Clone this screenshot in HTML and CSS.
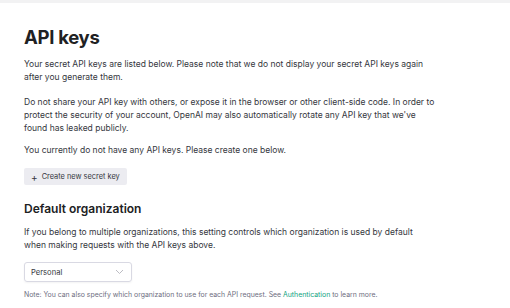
FILE: index.html
```html
<!DOCTYPE html>
<html>
<head>
<meta charset="utf-8">
<link rel="stylesheet" href="styles.css">
</head>
<body>
<div class="topbar"></div>
<main class="page">
  <h1 class="title">API keys</h1>
  <p class="para p1">Your secret API keys are listed below. Please note that we do not display your secret API keys again after you generate them.</p>
  <p class="para p2">Do not share your API key with others, or expose it in the browser or other client-side code. In order to protect the security of your account, OpenAI may also automatically rotate any API key that we've found has leaked publicly.</p>
  <p class="para p3">You currently do not have any API keys. Please create one below.</p>
  <button class="btn"><span class="plus">+</span>Create new secret key</button>
  <h2 class="subtitle">Default organization</h2>
  <p class="para p4">If you belong to multiple organizations, this setting controls which organization is used by default when making requests with the API keys above.</p>
  <div class="select">
    <span>Personal</span>
    <svg class="chev" width="9" height="6" viewBox="0 0 9 6"><path d="M1 1l3.5 3.5L8 1" fill="none" stroke="#b4b4bc" stroke-width="0.9"/></svg>
  </div>
  <p class="note">Note: You can also specify which organization to use for each API request. See <a class="link">Authentication</a> to learn more.</p>
</main>
</body>
</html>
```
FILE: styles.css
```css
html, body { margin: 0; padding: 0; background: #fff; }
body { font-family: Inter, "Noto Sans", sans-serif; color: #353740; width: 510px; height: 308px; overflow: hidden; }
.topbar { height: 3px; background: #f2f2f3; }
.page { padding: 0 24px; width: 416px; }
.title { margin: 22px 0 0; font-size: 18.5px; line-height: 24px; font-weight: 700; color: #202123; letter-spacing: -0.3px; }
.para { margin: 0; font-size: 8.5px; line-height: 13px; }
.p1 { margin-top: 9px; }
.p2 { margin-top: 12px; }
.p3 { margin-top: 9px; }
.btn { display: flex; align-items: center; margin-top: 11px; height: 17px; padding: 0 7px; border: 0; border-radius: 2px; background: #ececf1; font-family: inherit; font-size: 7.4px; color: #353740; }
.plus { font-size: 10px; margin-right: 4px; line-height: 1; }
.subtitle { margin: 16px 0 0; font-size: 12px; line-height: 16px; font-weight: 600; color: #202123; }
.p4 { margin-top: 9px; max-width: 400px; }
.select { display: flex; align-items: center; justify-content: space-between; margin-top: 10px; width: 108px; height: 20px; padding: 0 7px 0 6px; box-sizing: border-box; border: 1px solid #d9d9e3; border-radius: 3px; font-size: 7.6px; box-shadow: 0 1px 2px rgba(0,0,0,.05); }
.note { margin: 8px 0 0; font-size: 6.9px; line-height: 9px; color: #6e6e80; }
.link { color: #10a37f; }
```
